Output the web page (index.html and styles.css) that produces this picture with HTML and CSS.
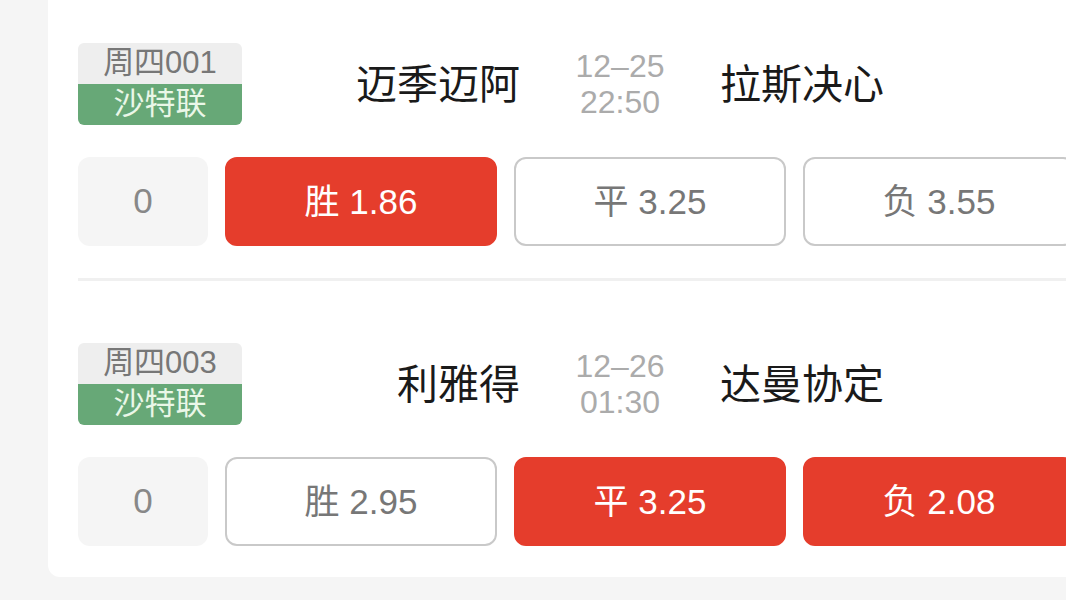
FILE: index.html
```html
<!DOCTYPE html>
<html lang="zh-CN">
<head>
<meta charset="utf-8">
<title>赛事</title>
<link rel="stylesheet" href="styles.css">
</head>
<body>
<div class="viewport">
<div class="card">
  <div class="match">
    <div class="head">
      <div class="tag">
        <div class="tag-no">周四001</div>
        <div class="tag-league">沙特联</div>
      </div>
      <div class="team team-home">迈季迈阿</div>
      <div class="time"><span>12–25</span><span>22:50</span></div>
      <div class="team team-away">拉斯决心</div>
    </div>
    <div class="odds">
      <div class="handicap">0</div>
      <div class="btn on">胜 1.86</div>
      <div class="btn">平 3.25</div>
      <div class="btn">负 3.55</div>
    </div>
  </div>
  <div class="match">
    <div class="head">
      <div class="tag">
        <div class="tag-no">周四003</div>
        <div class="tag-league">沙特联</div>
      </div>
      <div class="team team-home">利雅得</div>
      <div class="time"><span>12–26</span><span>01:30</span></div>
      <div class="team team-away">达曼协定</div>
    </div>
    <div class="odds">
      <div class="handicap">0</div>
      <div class="btn">胜 2.95</div>
      <div class="btn on">平 3.25</div>
      <div class="btn on">负 2.08</div>
    </div>
  </div>
</div>
</div>
</body>
</html>
```

FILE: styles.css
```css
html, body {
  margin: 0;
  padding: 0;
  background: #f5f5f5;
}
body {
  font-family: "Liberation Sans", "Noto Sans CJK SC", sans-serif;
}
.viewport {
  width: 1066px;
  height: 600px;
  overflow: hidden;
}
.card {
  margin-left: 48px;
  width: 1060px;
  background: #ffffff;
  border-radius: 0 0 0 12px;
  padding: 0 30px;
}
.match {
  padding: 62px 0 32px;
}
.match:first-child {
  padding-top: 43px;
  border-bottom: 3px solid #f0f0f0;
}
.match:last-child {
  padding-bottom: 31px;
}
.head {
  display: grid;
  grid-template-columns: 164px 278px 200px auto;
  align-items: center;
  height: 82px;
}
.tag {
  width: 164px;
  border-radius: 6px;
  overflow: hidden;
  display: flex;
  flex-direction: column;
  text-align: center;
}
.tag-no {
  height: 41px;
  line-height: 40px;
  background: #eeeeee;
  color: #777777;
  font-size: 31px;
}
.tag-league {
  height: 41px;
  line-height: 40px;
  background: #67a877;
  color: #eaf7e8;
  font-size: 31px;
}
.team {
  font-size: 41px;
  line-height: 50px;
  padding-top: 2px;
  color: #1a1a1a;
  white-space: nowrap;
}
.team-home {
  text-align: right;
}
.team-away {
  text-align: left;
}
.time {
  display: flex;
  flex-direction: column;
  align-items: center;
  color: #ababab;
  font-size: 32px;
  line-height: 36px;
}
.odds {
  display: flex;
  gap: 17px;
  margin-top: 32px;
  height: 89px;
}
.handicap {
  width: 130px;
  flex: none;
  background: #f5f5f5;
  border-radius: 12px;
  color: #888888;
  font-size: 35px;
  display: flex;
  align-items: center;
  justify-content: center;
  padding-bottom: 2px;
  box-sizing: border-box;
}
.btn {
  width: 272px;
  flex: none;
  box-sizing: border-box;
  border: 2px solid #c9c9c9;
  border-radius: 12px;
  color: #777777;
  font-size: 35px;
  display: flex;
  align-items: center;
  justify-content: center;
  padding-bottom: 6px;
  background: #ffffff;
}
.btn.on {
  background: #e53d2c;
  border-color: #e53d2c;
  color: #ffffff;
}
```
